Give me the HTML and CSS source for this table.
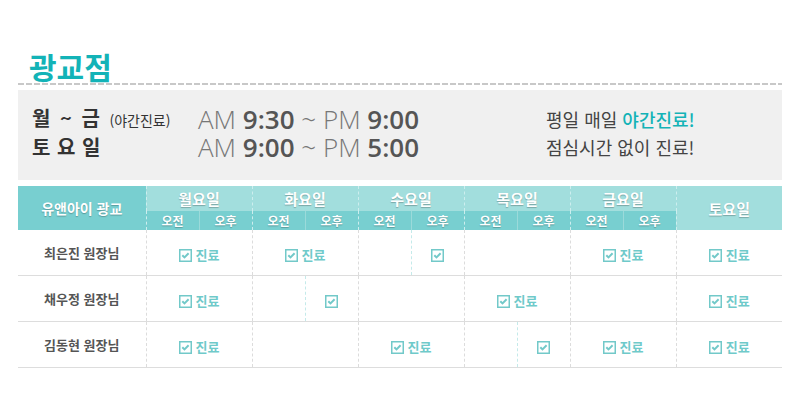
FILE: index.html
```html
<!DOCTYPE html>
<html lang="ko">
<head>
    <meta charset="UTF-8">
    <title>광교점 진료시간</title>
    <link rel="stylesheet" href="styles.css">
</head>
<body>
    <div class="wrap">
        <h1 class="branch">광교점</h1>
        <div class="dash"></div>

        <div class="hours">
            <div class="day-label">월 ~ 금 <small>(야간진료)</small></div>
            <div class="time"><span class="ap">AM</span> <b>9:30</b> <span class="ap">~ PM</span> <b>9:00</b></div>
            <div class="note">평일 매일 <em>야간진료!</em></div>

            <div class="day-label sat">토 요 일</div>
            <div class="time"><span class="ap">AM</span> <b>9:00</b> <span class="ap">~ PM</span> <b>5:00</b></div>
            <div class="note">점심시간 없이 진료!</div>
        </div>

        <table class="schedule">
            <colgroup>
                <col class="c-name">
                <col span="12" class="c-half">
            </colgroup>
            <thead>
                <tr class="h-top">
                    <th rowspan="2" class="h-name">유앤아이 광교</th>
                    <th colspan="2" class="day">월요일</th>
                    <th colspan="2" class="day">화요일</th>
                    <th colspan="2" class="day">수요일</th>
                    <th colspan="2" class="day">목요일</th>
                    <th colspan="2" class="day">금요일</th>
                    <th colspan="2" rowspan="2" class="day sat-h">토요일</th>
                </tr>
                <tr class="h-sub">
                    <th class="day">오전</th><th class="pm">오후</th>
                    <th class="day">오전</th><th class="pm">오후</th>
                    <th class="day">오전</th><th class="pm">오후</th>
                    <th class="day">오전</th><th class="pm">오후</th>
                    <th class="day">오전</th><th class="pm">오후</th>
                </tr>
            </thead>
            <tbody id="rows"></tbody>
        </table>
    </div>

    <script>
        // w = 종일 진료, a/p = 오전/오후만, 빈칸은 휴진
        const doctors = [
            { name: '최은진 원장님', days: ['w', 'w', ['', 'p'], '', 'w', 'w'] },
            { name: '채우정 원장님', days: ['w', ['', 'p'], '', 'w', '', 'w'] },
            { name: '김동현 원장님', days: ['w', '', 'w', ['', 'p'], 'w', 'w'] }
        ];

        const box = '<svg class="chk" width="13" height="13" viewBox="0 0 13 13"><rect x="0.75" y="0.75" width="11.5" height="11.5" fill="#fff" stroke="#72c9c9" stroke-width="1.5"/><path d="M3.3 6.2 L5.5 8.4 L9.6 4.3" fill="none" stroke="#72c9c9" stroke-width="2"/></svg>';

        const tbody = document.getElementById('rows');
        doctors.forEach(doc => {
            const row = document.createElement('tr');
            let html = `<td class="name">${doc.name}</td>`;
            doc.days.forEach(d => {
                if (Array.isArray(d)) {
                    html += `<td class="day">${d[0] ? box : ''}</td>`;
                    html += `<td class="pm">${d[1] ? box : ''}</td>`;
                } else if (d === 'w') {
                    html += `<td colspan="2" class="day">${box}<span class="ok">진료</span></td>`;
                } else {
                    html += `<td colspan="2" class="day"></td>`;
                }
            });
            row.innerHTML = html;
            tbody.appendChild(row);
        });
    </script>
</body>
</html>
```

FILE: styles.css
```css
body {
    margin: 0;
    background-color: #fff;
    font-family: "Noto Sans CJK KR", "Noto Sans", sans-serif;
}

.wrap {
    width: 764px;
    padding: 49px 18px 0;
}

.branch {
    margin: 0 0 0 11px;
    font-size: 30px;
    line-height: 34px;
    font-weight: bold;
    color: #13b3b7;
}

.dash {
    height: 2px;
    background: repeating-linear-gradient(90deg, #c8c8c8 0 6px, transparent 6px 8px);
}

.hours {
    display: grid;
    grid-template-columns: 166px 348px 1fr;
    grid-auto-rows: 28px;
    align-items: center;
    height: 90px;
    margin-top: 5px;
    padding: 15px 0 0 14px;
    box-sizing: border-box;
    background-color: #f0f0f0;
}

.hours > div {
    line-height: 28px;
    white-space: nowrap;
}

.day-label {
    font-size: 20px;
    font-weight: bold;
    color: #333;
    word-spacing: 4px;
}

.day-label small {
    font-size: 14px;
    font-weight: normal;
    word-spacing: 0;
}

.day-label.sat {
    word-spacing: 1px;
}

.time {
    font-family: "Open Sans", sans-serif;
    font-size: 26px;
    color: #555;
}

.time .ap {
    font-weight: 300;
    color: #777;
}

.time b {
    font-weight: 600;
}

.note {
    font-size: 18px;
    color: #444;
}

.note em {
    font-style: normal;
    font-weight: 500;
    color: #13b3b7;
}

.schedule {
    width: 764px;
    margin-top: 6px;
    border-collapse: collapse;
    table-layout: fixed;
}

.c-name {
    width: 128px;
}

.c-half {
    width: 53px;
}

th {
    padding: 0;
    font-weight: bold;
    color: #fff;
    text-shadow: 0 1px 1px rgba(0, 0, 0, 0.25);
}

.h-top th {
    height: 25px;
    font-size: 15px;
    background-color: #a2dedd;
}

.h-top th.h-name {
    font-size: 14px;
    background-color: #78cfd0;
}

.h-top th.day {
    border-left: 1px dashed #cdeeee;
}

.h-sub th {
    height: 19px;
    font-size: 12px;
    background-color: #78cfd0;
}

.h-sub th.day {
    border-left: 1px dashed #cdeeee;
}

.h-sub th.pm {
    border-left: 1px solid #9bdada;
}

td {
    height: 45px;
    padding: 0;
    text-align: center;
    border-bottom: 1px solid #dddddd;
}

td.day {
    border-left: 1px dashed #dcdcdc;
}

td.pm {
    border-left: 1px dashed #c4eaea;
}

td.name {
    font-size: 13px;
    font-weight: bold;
    color: #555;
}

.chk {
    vertical-align: -2px;
}

.ok {
    margin-left: 4px;
    font-size: 13px;
    font-weight: bold;
    color: #6fcaca;
}
```
